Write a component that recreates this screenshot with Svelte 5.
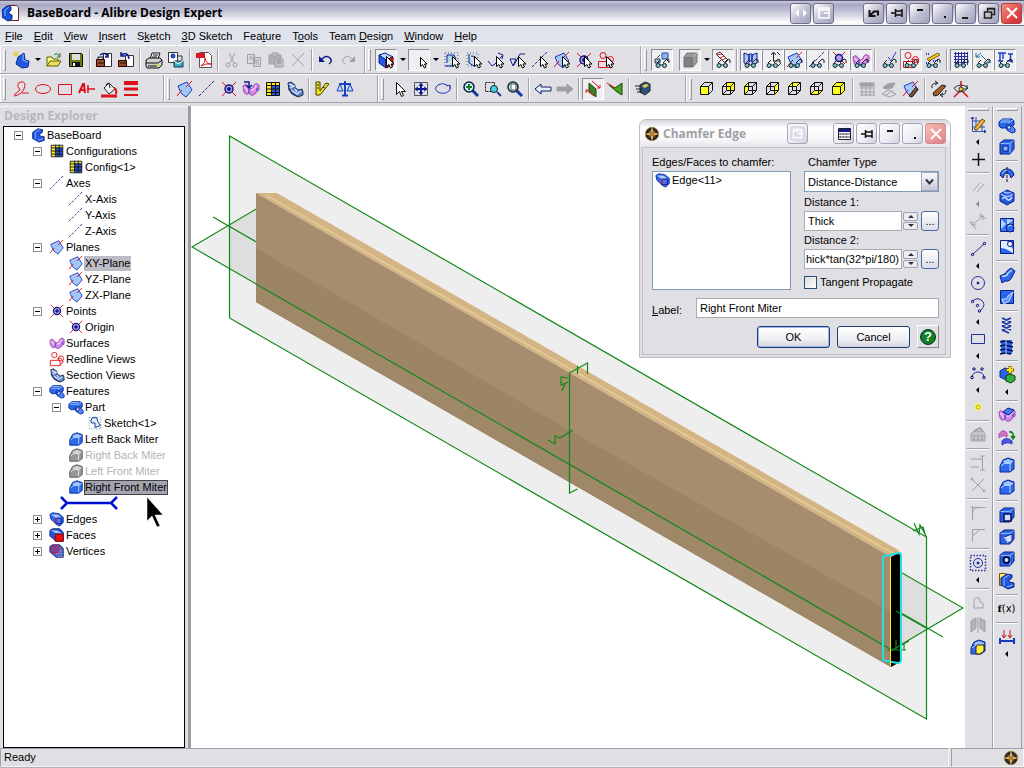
<script>
  const p = (d, stroke = '#000080', fill = 'none', w = 1) =>
    `<path d="${d}" stroke="${stroke}" fill="${fill}" stroke-width="${w}"/>`;
  const c = (x, y, r, stroke = '#000080', fill = 'none', w = 1) =>
    `<circle cx="${x}" cy="${y}" r="${r}" stroke="${stroke}" fill="${fill}" stroke-width="${w}"/>`;

  const RED = '#e0101c';
  const GRAY = '#a0a0a4';
  const NAVY = '#101a90';

  const cursor = p('M9.5 5.5v10l2.5-2 1.5 3.5 2-1-1.5-3h3z', '#000', '#fff');
  const glasses =
    p('M4 12l3-3M10 12l4-4 2 1v3', '#222') + c(5, 14.5, 2, '#123', '#7cc') + c(11.5, 14.5, 2, '#123', '#7cc') + p('M7 14h3', '#222');
  const plane = p('M2 6l9-4 5 8-6 7-5-4z', '#2038c0', '#a0c8f8') + p('M1 16l5-6M10 7l6-6', RED);
  const axis = p('M1 16L16 1', '#202080').replace('/>', ' stroke-dasharray="3 1.5"/>');
  const point = p('M2 2l14 14M16 2L2 16', RED) + c(9, 9, 4, NAVY, '#b8a0d8', 1.5) + c(9, 9, 1.5, NAVY, NAVY);
  const surface = p('M1 6q3-3 5 1l3 2q2 0 3-4 2-3 5 0v5q-2 1-4 4-4 3-6-1-3 3-5-1z', '#9c48b8', '#d488e4') +
    p('M2 8q2-1 4 4M9 10q3 1 5-5', '#f4c8fa', 'none', 1.5) + p('M7 9v5M15 8v3', '#7860d0', 'none', 2);
  const redline = c(6, 4.5, 3, RED) + p('M1.500 10.500h11v6h-11zM9 9l4-1 3 4-3 4', RED) + c(13.500, 8.500, 3, RED);
  const table = p('M2.5 2.500h13v13h-13z', '#111', '#2458d8') + p('M3 3h4v12h-4zM7 3h8v2h-8z', 'none', '#ffe820') + p('M2.5 5.500h13M2.500 9h13M2.500 12.500h13M7.500 2v13M11.500 2v13', '#111');
  const section = p('M2 3l3-1 4 3v3l4 2 3-1 1 3v3l-5 2-6-3-3-4z', '#203050', '#5c7cc8') + p('M3 4l5 2-4 2M5 10l6 4 4-3M9 9l2 3', '#d4e0ff', 'none', 1.500) + p('M3 8l3 5 5 3', '#203050');
  const part = p('M1 6l3-3h10l2 2v4l-3 3H3l-2-2z', '#0a2a98', '#2c66e8') + p('M2 6h9v5M11 6l4-2M3 4h9', '#9cc0ff') + p('M8 10l2-2 3 1 4 4v3l-3 1-5-3z', '#0a2a98', '#4a86ff') + c(11, 11.500, 1.800, '#0a2a98', '#cfe0ff');
  const solid = (inner = '') => p('M2 5l4-3h10v9l-4 5h-10z', '#08208c', '#2a62e4') + p('M2.5 5.500h9.500v10M12 5.500l4-3', '#8cb8ff') + inner;
  const fillet = p('M2 10l3-6 5-2 6 2v9l-4 3H2z', '#0a2a98', '#2f68ea') + p('M5 5l5-2 5 2-4 3H7z', 'none', '#9cc4ff') + p('M3 10l4-3h5v8M12 8l3-3', '#b8d4ff');
  const edge = p('M1 4l3-2 7 1 5 4v6l-4 4-4-2-6-6z', '#0a2a98', '#2f68ea') + p('M2 4h7l5 3-6 1z', 'none', '#a8ccff') + p('M8 8h6v6H8z', '#08208c', '#3c7af4') + p('M8 8v6', '#e01040', 'none', 1.500);
  const newp = p('M6 6l6-4 1 7 4 1-1 6-6 1-6-4z', '#0a2a98', '#2458e0') + p('M11 3v6l5 2', '#8cb8ff') + p('M1 3h6M4 0v6M2 1l4 4M6 1l-4 4', '#e8d020');
  const blueC = p('M3 6l6-4 5 1v3l-3 2v2l5 1v4l-6 2-7-4z', '#08208c', '#2458e0') + p('M6 6l5-3M6 6v8M9 15l6-2', '#8cb8ff');
  const viewCube = (face) => {
    const faces = {
      front: 'M2 6h9v9H2z', back: 'M6 2h9v9H6z', left: 'M2 6l4-4v9l-4 4z', right: 'M11 6l4-4v9l-4 4z',
      top: 'M2 6l4-4h9l-4 4z', bottom: 'M2 15l4-4h9l-4 4z', iso: 'M2 6l4-4h9v9l-4 4H2z'
    };
    return p(faces[face], 'none', '#ffff20') + p('M2.500 6.500h8v8h-8zM2.500 6.500l4-4h8l-4 4M14.500 2.500v8l-4 4', '#111') +
      (face === 'iso' || face === 'front' ? '' : p('M6.500 2.500v8h8M6.500 10.500l-4 4', '#111'));
  };
  const mag = (inner, lens = '#c8f0ff') => p('M10 10l6 6', '#1838a0', 'none', 3) + c(7, 7, 5, '#123', lens, 1.5) + inner;

  const icons = {
    new: newp,
    open: p('M2 15V6h5l1 2h5v3', '#606000', '#ffff90') + p('M2 15l3-5h11l-3 5z', '#606000', '#e8e060') + p('M9 4q3-3 5 1M15 2v4h-3', '#107020'),
    save: p('M2.500 2.500h12l1 1v12h-13z', '#111', '#707810') + p('M5 3h8v6H5z', 'none', '#dcdce0') + p('M5 11h8v5H5z', 'none', '#111') + p('M6 12h2v3H6z', 'none', '#fff'),
    pack: p('M8.500 2.500h8v13h-8z', '#333', '#fff') + p('M1.500 8.500h8v7h-8z', '#200', '#9a4a20') + p('M3 8V6h5v2M3 12h6', '#111') + p('M5 4q5-4 8 2M10 6h3V3', NAVY, 'none', 1.5),
    unpack: p('M8.500 4.500h8v11h-8z', '#333', '#fff') + p('M1.500 9.500h8v6h-8z', '#200', '#9a4a20') + p('M3 12h6', '#111') + p('M4 4q7-4 8 4M4 1v4h4', NAVY, 'none', 1.5),
    print: p('M5 8l2-6h8l-2 6z', '#111', '#fff') + p('M1 9l3-2h11l2 2v5l-3 3H2l-1-2z', '#111', '#d0d0d0') + p('M1 12h12l4-3M3 15h9M8 4h5M7 6h5', '#111') + p('M11 14h2', '#d8d800', 'none', 2),
    publish: p('M1.500 1.500h9v10h-9z', '#333', '#fff') + c(6, 5, 2, NAVY, '#2c66e8') + p('M7 10h9v6H7z', '#234', '#30b0c0') + p('M7 10l4 3 5-3', '#fff') + p('M11 5h4v4', '#234'),
    pdf: p('M4.500 1.500h9l3 3v12h-12z', '#555', '#fff') + p('M1 2h9v5H1z', 'none', '#d81820') + p('M6 15q5-3 4-8 1 6 6 6-5-1-10 2', '#d81820'),
    cut: p('M6 2l5 10M12 2L7 12', GRAY) + c(5, 14, 2, GRAY) + c(12, 14, 2, GRAY),
    copy: p('M2.500 3.500h7v9h-7zM8.500 6.500h7v9h-7z', GRAY, '#dcdce0') + p('M4 6h4M4 8h4M10 9h4M10 11h4M10 13h4', GRAY),
    paste: p('M2 4h12v9H2z', GRAY, '#b0b0b4') + p('M5 2h6v3H5zM8 8h8v8H8z', GRAY, '#c0c0c4') + p('M10 10h4M10 12h4', '#888'),
    del: p('M3 3l12 12M15 2L3 15', GRAY),
    undo: p('M4 9q5-6 9-2 3 3-1 6', NAVY, 'none', 1.5) + p('M2 5v6h6z', 'none', NAVY),
    redo: p('M14 9q-5-6-9-2-3 3 1 6', GRAY) + p('M16 5v6h-6z', 'none', GRAY),
    filter: p('M2 4l6-2 8 4-7 3z', '#08208c', '#bcd4ff') + p('M2 4l7 5v8l-7-5z', '#08208c', '#2458e0') + p('M9 9l7-3v8l-7 3z', '#600', '#e01020') + cursor,
    select: p('M10.500 6.500v9l2-2 2 3.500 1.500-1-1.500-3h2.500z', '#000', '#fff'),
    selSketch: p('M2 15h8l1-4M4 12V4h7l2 4', NAVY, '#a8d8e8') + p('M2 2h13v13H2z', '#2058a0').replace('/>', ' stroke-dasharray="1 2"/>') + cursor,
    selFig: p('M4 3v9l5 3M6 5q6 0 6 5', NAVY, '#a8d8e8') + p('M2 2h11v13H2z', '#208080').replace('/>', ' stroke-dasharray="1 2"/>') + cursor,
    selLine: p('M1 10l4 5 3-2 7-8M11 2l5 2-1 4', NAVY) + cursor,
    selCheck: p('M1 8h6l-3 7-3-7M5 14l6-11h5', NAVY) + cursor,
    selAxis: axis + cursor,
    selPlane: plane + cursor,
    selPoint: point + cursor,
    selRed: redline + cursor,
    seeParts: p('M9 2h6v6H9z', '#2050a0', '#8cb8e8') + p('M2 8h5v4H2z', '#235', '#9cd') + p('M7 4l-3 3M13 8l3 3', '#235') + glasses,
    shaded: p('M3 6l3-4h10v9l-4 5H3z', '#777', '#989898') + p('M3.500 6.500h8v9h-8z', '#777', '#808080') + p('M12 6l4-4', '#bbb'),
    seeThread: p('M2 3l4-2 8 8-3 3z', '#333', '#fff') + p('M3 4l5-1M6 7l4-2M8 9l4-2', '#d02020') + glasses,
    seePlanes: p('M2 2l5 2v10l-5-2zM10 4l5-2v10l-5 2zM7 3h3v7H7z', NAVY, '#a8c8f8') + glasses,
    seeAxes: p('M9.500 10V2M7 4l2.500-3 2.500 3M9 10h7M13 1l3 3M14 15l3-3', '#222') + glasses,
    seePlane: plane + glasses,
    seeAxis: axis + glasses,
    seePoint: p('M3 1l12 12M15 1L3 13', RED) + c(9, 7, 3.5, NAVY, '#b8a0d8', 1.5) + glasses,
    seeSurf: surface + glasses,
    seeCheck: p('M8 6l3 4 5-9', '#2040d0') + glasses,
    seeRed: redline + glasses,
    seeSketch: p('M3 8L14 2l2 2L5 10z', '#806000', '#f0c830') + p('M2 3h3M9 10h6M2 12h2', '#2040c0', 'none', 2).replace('/>', ' stroke-dasharray="1 1"/>') + glasses,
    seeGrid: p('M2 2.500h14M2 5.500h14M2 8.500h14M2 11.500h14M3.500 1v13M6.500 1v13M9.500 1v13M12.500 1v13M15.500 1v13', '#2030a0') + glasses,
    seeDim: p('M2 6l5-4M2 2v4h4M7 4l8 8M15 8v4h-4', '#1870a0') + glasses,
    seeCon: p('M2 2h8M4 2v8M7 2v6M2 10h5M12 3h5M14.500 3v8M11 10h6', '#2040d0', 'none', 1.5) + glasses,

    rCurve: p('M2 15l6-5q-5-7 1-8t3 7q-3 6-10 7M10 13h7', RED),
    rEllipse: `<ellipse cx="9" cy="9" rx="7.5" ry="4.5" stroke="${RED}" fill="none"/>`,
    rRect: p('M2.500 4.500h13v10h-13z', RED),
    rText: p('M1 13l4-9h1l1 9M3 10h4', RED, 'none', 2) + p('M9 9h8M10 5v8', RED, 'none', 1.5),
    rFill: p('M4 8l5-5 6 6-6 5z', '#222', '#f0f0f0') + p('M6 5q3-5 4 3', '#222') + p('M14 8q3 1 2 6', RED, 'none', 2) + p('M1 16h16', RED, 'none', 3),
    rWidth: p('M2 3h14', RED, 'none', 4) + p('M2 9h14', RED, 'none', 3) + p('M2 15h14', RED, 'none', 2),
    plane, axis, point, table, section,
    surfIn: surface + p('M2 2h5v5M4 5l3 3 3-3', NAVY, 'none', 1.5),
    measure: p('M2 2v13h4L15 4l-3-1-6 8V2z', '#404000', '#f0e020') + p('M3 5h2M3 8h2M9 7l2 1', '#333'),
    scale: p('M9 1v14M3 4h12M6 15.500h6', '#1840c0', 'none', 2) + p('M4 4l-3 7h6zM14 4l-3 7h6z', '#1840c0', '#b0d8f8'),

    arrow: p('M6.500 2.500v12l3-3 2 5 2-1-2-4h4z', '#111', '#fff'),
    pan: p('M2.500 2.500h13v13h-13z', '#555') + p('M9 4v10M4 9h10', NAVY, 'none', 2) + p('M7 6l2-3 2 3M7 12l2 3 2-3M6 7L3 9l3 2M12 7l3 2-3 2', NAVY),
    orbit: p('M13 5q-5-3-9 0-5 4 0 7 6 3 11-1 2-2 1-5M12 6l4-1v4', '#2038c0'),
    zoom: mag(p('M7 4v6M4 7h6', '#108020', 'none', 2)),
    zoomBox: p('M1.500 2.500h9v9h-9z', '#111').replace('/>', ' stroke-dasharray="2 1"/>') + c(10, 9, 3.5, '#123', '#40d8e0') + p('M13 12l4 4', '#1838a0', 'none', 2),
    zoomFit: mag(p('M5 4h4l1 1v5H5z', '#555', '#fff')),
    back: p('M1 9l6-5v3h10v4H7v3z', '#111a70', '#e8f0ff'),
    fwd: p('M17 9l-6-5v3H1v4h10v3z', GRAY, GRAY),
    faceA: p('M5 3l7 6v8l-7-6z', '#105010', '#408020') + p('M8 1l8 7M2 10l8 6M2 13v-3h3M16 5v3h-3', RED),
    faceB: p('M3 5l6 3 7-5v12l-5-3z', '#105010', '#50a020') + p('M1 3l8 5', RED),
    render: p('M6 5l5-3 5 2v7l-5 4-5-3z', '#222', '#305080') + p('M8 6l4-2 3 1-4 3z', 'none', '#e8d840') + p('M1 6h6M2 9h5M3 12h5M7 8v5', '#222'),
    front: viewCube('front'), back3: viewCube('back'), left: viewCube('left'), right: viewCube('right'),
    top: viewCube('top'), bottom: viewCube('bottom'), iso: viewCube('iso'),
    gridOff: p('M2 4h14M2 8h14M2 12h14M2 15h14M4 2v14M8 2v14M12 2v14M16 2v14', GRAY) + p('M2 3h13v3H2z', GRAY, GRAY),
    layOff: p('M3 8q3-5 12-5l-3 5q-4 2-9 0z', GRAY, GRAY) + p('M2 14l6-4 8 4-6 3zM5 16l8-6', GRAY),
    planeEd: plane + p('M7 16l7-9 2 2-6 8z', '#222', '#8a5020'),
    rot: p('M3 13l9-8 4 1-8 9-4 1z', '#222', '#a06020') + p('M2 8q-1-5 5-5M5 1l3 2-3 2M16 10q0 5-5 5M13 13l-3 2 3 2', '#222'),
    axesRot: p('M9 1v9M9 10l-7 7M9 10l7 7', RED, 'none', 1.5) + p('M2 8q7-6 14 0-3 4-8 4-4 0-6-4M15 5v4h-4', '#333') + c(9, 9, 2, '#333', '#e8e020'),

    sketch: p('M3.500 1v14.500H17M7 1v14M13 3v12M3 5h13M3 11h13', '#3050b0') + p('M5 13l8-10 3 2-8 9z', '#805000', '#f0b830') + p('M2 3l1.500-2L5 3M15 14l2 1.500-2 1.500', NAVY),
    cross: p('M9.500 3v13M3 9.500h13', '#111', 'none', 1.5),
    para: p('M4 13l7-8M8 14l7-8', GRAY),
    dim: p('M3 13l11-9M1 10l6 7M11 1l6 6M3 9v4h4M10 4h4v4', GRAY),
    line: p('M4 14L15 4', '#2030a0') + c(3.5, 14.5, 1.2) + c(15.5, 3.5, 1.2),
    circle: c(9, 9, 6.5, '#2030a0') + c(9, 9, 1, NAVY, NAVY),
    arc: p('M4 5q4-4 8-1 6 4 0 10', '#2030a0') + c(3.5, 5.5, 1.2) + c(8.500, 9.500, 1.2) + c(10.500, 15, 1.2),
    rect: p('M2.500 4.500h13v9h-13z', '#2030a0'),
    spline: p('M3 13q1-5 6-5t6 5', '#2030a0') + c(3, 13.500, 1.300) + c(15, 13.500, 1.300) + c(5, 5, 1.200) + c(13, 5, 1.200),
    dot: c(9, 9, 4, 'none', '#f4f090') + c(9, 9, 2, '#c0a800', '#ffff20'),
    tool: p('M2 8l3-3h9l2 3v7H2z', GRAY, '#c4c4c8') + p('M5 5l6-3 3 3M4 10h2M8 10h2M12 10h2M4 13h2M8 13h2M12 13h2', '#999', 'none', 1.500),
    trimT: p('M2 5h11M2 13h8M13.500 2v14M11 2h5M11 16h5', GRAY),
    trimX: p('M3 3l12 12M15 3L3 15', GRAY) + c(3, 3, 1, GRAY) + c(15, 15, 1, GRAY),
    cornerA: p('M3.500 16V10q0-6 6-6.500h7M2 3.500h8M3.500 2v8', GRAY),
    cornerB: p('M3.500 16V3.500H16M3.500 10l7-6', GRAY),
    dotted: p('M1.500 1.500h15v15h-15z', '#2030a0', 'none', 1.5).replace('/>', ' stroke-dasharray="1.500 1.500"/>') + c(9, 9, 4.500, '#2030a0') + c(9, 9, 1, NAVY, NAVY),
    shape: p('M5 14V7q0-4 5-3l1 4 3 1v5z', GRAY),
    mirror: p('M2 5l5-3v10l-5 4zM16 5l-5-3v10l5 4z', GRAY, '#b4b4b8') + p('M9 1v16', GRAY),
    yellowF: fillet + p('M8 7h7v6l-4 3H7V9z', '#222', '#fff040'),

    extrude: part,
    shell: solid(p('M5 8h5v5H5z', '#08208c', '#8cb8ff')),
    revolve: p('M2 9q1-6 7-6t7 6l-3 3q-1-5-4-5t-4 5z', '#08208c', '#2c66e8') + p('M9 1v16', '#111').replace('/>', ' stroke-dasharray="3 1"/>') + p('M4 8q2-4 5-4', '#a8ccff'),
    revCut: p('M2 6l7-4 7 3v8l-7 4-7-4z', '#08208c', '#2458e0') + p('M3 6q6 5 12 0M6 4q4 2 7 0', '#a0c4ff', 'none', 1.500) + p('M4 11q3-3 5 0t5-2', '#cfe0ff', 'none', 1.500),
    loft: p('M2.500 2.500h13v13h-13z', '#08208c', '#3c78f0') + p('M3 3l5 5-5 5zM9 3l6 1-6 5z', 'none', '#b8d4ff') + c(12, 12, 4, '#08208c', '#3068e8') + p('M10 11l2-2 2 1', '#cfe0ff'),
    loftCut: p('M2.500 2.500h13v13h-13z', '#08208c', '#2c66e8') + p('M3 3l6-0 6 8v4l-7-4-5-1z', 'none', '#e0ecff') + c(12, 6, 2.500, '#08208c', '#fff'),
    sweep: p('M2 10l4-2q2 0 3-3l4-3 4 3-3 6q-2 5-7 4l-3 2z', '#08208c', '#2c66e8') + p('M4 10q5 1 6-3l4-3', '#b8d4ff', 'none', 1.500),
    sweepCut: p('M2.500 2.500h13v13h-13z', '#08208c', '#2c66e8') + p('M4 11q5 1 6-3l5-4-4 9-5 3z', '#cfe0ff', '#5c96ff'),
    helix: p('M4 2l9 4M4 6l9 4M4 10l9 4M4 14l7 3M13 2L4 6M13 6l-9 4M13 10l-9 4', '#1838a8', 'none', 1.800),
    helixCut: p('M3 2h11v14H3z', 'none', '#2c66e8') + p('M2 4l5-1 8 2M2 8l5-1 8 2M2 12l5-1 8 2M2 16l5-1 6 1', '#08104c', 'none', 1.500) + p('M8 2v14', '#a8ccff'),
    boolean: p('M2 5l5-3 6 2v6l-5 4-6-3z', '#08208c', '#2c66e8') + p('M8 10l4-2 5 2v4l-4 3-5-2z', '#084008', '#30b040') + p('M12 0v8M8 4h8', '#806000', 'none', 3) + p('M12 1v6M9 4h6', '#ffe800', 'none', 2),
    surfTop: surface + p('M5 6l5-4 6 2-5 5z', '#08208c', '#4c78f0'),
    surfRep: p('M1 6q4-6 8-1v4q-4-3-8 1z', '#b050c0', '#d070c0') + p('M4 13q4-5 10 0v3q-5-3-10 1z', '#3030c0', '#4858e8') + p('M11 4q5-1 4 6M13 8l2 3 2-3', '#108020', 'none', 1.500),
    fillet, solid1: solid(p('M6 8h7v7H6z', '#000c50', '#cfe0ff', 1.500)),
    solid2: solid(p('M6 9l8-3v7l-4 2z', '#08208c', '#cfe0ff') + p('M6 9l4 6', '#cfe0ff')),
    hole: solid(c(8.500, 10, 3, '#000c50', '#cfe0ff', 2)),
    sheet: p('M1.500 1.500h6v12h-6z', '#805000', '#ffe880') + blueC,
    anno: p('M2 13h14M2 10v6M16 10v6', '#1838c0', 'none', 2) + p('M6 2v7M12 2v7M4 7l2 3 2-3M10 7l2 3 2-3', '#c01818'),
    base: blueC, surface, redline, part, edge,
    sketchN: p('M2.500 2.500h13v13h-13z', '#208090').replace('/>', ' stroke-dasharray="1 2"/>') + p('M6 3q-3 4-1 6l4 0 0 5 6-2-3-5-1-4z', NAVY, '#d8f0f8'),
    filletOff: p('M2 10l3-6 5-2 6 2v9l-4 3H2z', '#555', '#989898') + p('M5 5l5-2 5 2-4 3H7z', 'none', '#d0d0d0') + p('M3 10l4-3h5v8M12 8l3-3', '#e8e8e8'),
    face: p('M1 4l3-2h8l4 4v10H8l-7-6z', '#0a1a78', '#2458d8') + p('M2 4h7l6 3H8z', 'none', '#a8ccff') + p('M7 8h9v8H7z', '#700', '#f01010'),
    vertex: p('M1 4l3-2h8l4 4v10H8l-7-6z', '#0a1a78', '#5068c0') + p('M8 9h8M8 12h8M10 15h6', '#b0c8f8').replace('/>', ' stroke-dasharray="1 1"/>') + c(7, 7, 4, '#e01030', '#4060d8', 1.500) + c(7, 7, 1.500, '#e01030')
  };

  // Tokens: "|" separator, "_" gap, "v" drop arrow, leading "+" pressed
  const row1 = [
    { size: 365, items: 'new v open save | pack unpack | print publish | pdf | cut copy paste del | undo redo' },
    { size: 276, items: '+filter v +select v selSketch selFig selLine selCheck selAxis selPlane selPoint selRed' },
    { size: 0, items: '+seeParts _ +shaded v +seeThread | +seePlanes +seeAxes +seePlane +seeAxis +seePoint +seeSurf | seeCheck +seeRed seeSketch | +seeGrid +seeDim +seeCon' }
  ];
  const row2 = [
    { size: 164, items: 'rCurve rEllipse rRect rText rFill rWidth' },
    { size: 214, items: 'plane axis point surfIn table section | measure scale' },
    { size: 308, items: 'arrow pan orbit | zoom zoomBox zoomFit | back fwd | +faceA faceB | render' },
    { size: 0, items: 'front back3 left right top bottom iso | gridOff layOff planeEd | rot axesRot' }
  ];
  const side = [
    'sketch v cross | para w dim | line v circle arc v rect v spline v dot | tool | trimT trimX | cornerA cornerB | dotted v | shape mirror yellowF',
    'extrude shell | revolve revCut | loft loftCut | sweep sweepCut | helix helixCut | boolean v | surfTop surfRep | fillet fillet | solid1 solid2 hole sheet | fx | anno v'
  ];
  const menus = [['', 'F', 'ile'], ['', 'E', 'dit'], ['', 'V', 'iew'], ['', 'I', 'nsert'], ['S', 'k', 'etch'], ['', '3', 'D Sketch'],
    ['Fea', 't', 'ure'], ['T', 'o', 'ols'], ['Team ', 'D', 'esign'], ['', 'W', 'indow'], ['', 'H', 'elp']];

  const tree = [
    [0, '-', 'base', 'BaseBoard'], [1, '-', 'table', 'Configurations'], [2, '', 'table', 'Config<1>'],
    [1, '-', 'axis', 'Axes'], [2, '', 'axis', 'X-Axis'], [2, '', 'axis', 'Y-Axis'], [2, '', 'axis', 'Z-Axis'],
    [1, '-', 'plane', 'Planes'], [2, '', 'plane', 'XY-Plane', 'hot'], [2, '', 'plane', 'YZ-Plane'], [2, '', 'plane', 'ZX-Plane'],
    [1, '-', 'point', 'Points'], [2, '', 'point', 'Origin'], [1, '', 'surface', 'Surfaces'], [1, '', 'redline', 'Redline Views'],
    [1, '', 'section', 'Section Views'], [1, '-', 'part', 'Features'], [2, '-', 'part', 'Part'], [3, '', 'sketchN', 'Sketch<1>'],
    [2, '', 'fillet', 'Left Back Miter'], [2, '', 'filletOff', 'Right Back Miter', 'off'], [2, '', 'filletOff', 'Left Front Miter', 'off'],
    [2, '', 'fillet', 'Right Front Miter', 'picked'], null,
    [1, '+', 'edge', 'Edges'], [1, '+', 'face', 'Faces'], [1, '+', 'vertex', 'Vertices']
  ];

  const caption = {
    swap: p('M7 5l-4 4 4 4zM11 5l4 4-4 4z', 'none', '#fff'),
    panel: p('M4 4h10v10H4zM9 9h6M4 6h10', '#fff', 'none', 1.500),
    ret: p('M4.500 6v6h6M5 11.500l4-4h4v4', '#111', 'none', 2),
    pin: p('M3 9h4M7.500 5v8M8 7h6v4H8M14 5v8', '#111', 'none', 1.500),
    dash: p('M6 6h6', '#111', 'none', 2),
    dotc: p('M10 13h2', '#111', 'none', 2),
    min: p('M5 14h6', '#222', 'none', 2),
    max: p('M7.500 7.500v-3h7v6h-3M4.500 8h7v6h-7zM7 5h8', '#222', 'none', 1.500),
    close: p('M4 4l10 10M14 4L4 14', '#fff', 'none', 2),
    cal: p('M3.500 3.500h12v11h-12z', '#222', '#fff') + p('M4 4h11v3H4z', 'none', NAVY) + p('M6 8v6M9 8v6M12 8v6M4 9h11M4 12h11', '#445').replace('/>', ' stroke-dasharray="2 1"/>')
  };

  let kind = $state('Distance-Distance');
  let d1 = $state('Thick');
  let d2 = $state('hick*tan(32*pi/180)');
  let tangent = $state(false);
  let label = $state('Right Front Miter');
</script>

{#snippet glyph(body)}
  <svg class="glyph" viewBox="0 0 18 18" aria-hidden="true">{@html body}</svg>
{/snippet}

{#snippet tools(list)}
  {#each list.split(' ') as t}
    {#if t === '|'}<span class="sep"></span>
    {:else if t === '_'}<span class="gap"></span>
    {:else if t === 'v'}<button class="drop" aria-label="More"></button>
    {:else if t === 'w'}<button class="drop" disabled aria-label="More"></button>
    {:else if t === 'fx'}<button class="tool fx"><b>f</b>(x)</button>
    {:else}
      <button class="tool" class:pressed={t[0] === '+'} aria-label={t.replace('+', '')}>{@render glyph(icons[t.replace('+', '')])}</button>
    {/if}
  {/each}
{/snippet}

{#snippet cap(name, extra = '')}
  <button type="button" class="cap {extra}" aria-label={name}>{@render glyph(caption[name])}</button>
{/snippet}

{#snippet logo()}
  <svg class="logo" viewBox="0 0 18 18" aria-hidden="true">
    <circle cx="9" cy="9" r="7.500" fill="#20242c" stroke="#a08040" />
    <path d="M9 1l2 6 6 2-6 2-2 6-2-6-6-2 6-2z" fill="#e8b050" />
    <path d="M4 4l5 3 5-3-3 5 3 5-5-3-5 3 3-5z" fill="#8a5c28" opacity=".6" />
  </svg>
{/snippet}

<div class="app">
  <header class="title">
    <svg class="appicon" viewBox="0 0 18 18" aria-hidden="true">
      <path d="M6.500 1.500h8l2 2v13h-10z" fill="#fff" stroke="#702020" />
      <path d="M0 6l5-4 4 1v3l-2 2v2l3 1v4l-4 2-6-4z" fill="#1850e0" stroke="#08208c" />
      <path d="M3 6l4-3M3 6v6" stroke="#60c0ff" fill="none" />
    </svg>
    <h1>BaseBoard - Alibre Design Expert</h1>
    <div class="caps">
      {@render cap('swap')}{@render cap('panel', 'last')}
      {#each ['ret', 'pin', 'dash', 'dotc', 'min', 'max'] as n}{@render cap(n)}{/each}
      {@render cap('close', 'red')}
    </div>
  </header>

  <nav class="menu">
    {#each menus as m}<button>{m[0]}<u>{m[1]}</u>{m[2]}</button>{/each}
  </nav>

  {#each [row1, row2] as row}
    <div class="bars">
      {#each row as bar}
        <div class="bar" style:flex={bar.size ? `0 0 ${bar.size}px` : '1 1 0'}>
          <span class="grip"></span>{@render tools(bar.items)}
        </div>
      {/each}
    </div>
  {/each}

  <main>
    <aside class="explorer">
      <h2>Design Explorer</h2>
      <div class="treebox">
        <ul>
          {#each tree as n}
            {#if n}
              <li class="lv{n[0]}">
                <span class="exp" class:box={n[1]}>
                  {#if n[1]}<svg viewBox="0 0 9 9" aria-hidden="true"><path d={n[1] === '+' ? 'M2 4.500h5M4.500 2v5' : 'M2 4.500h5'} stroke="#000" /></svg>{/if}
                </span>
                {@render glyph(icons[n[2]])}
                <span class="name {n[4] ?? ''}">{n[3]}</span>
              </li>
            {:else}
              <li class="bone">
                <svg viewBox="0 0 58 14" aria-hidden="true"><path d="M1 1l6 6-6 6M57 1l-6 6 6 6M7 7h44" fill="none" stroke="#0010d0" stroke-width="2.500" /></svg>
              </li>
            {/if}
          {/each}
        </ul>
      </div>
      <svg class="pointer" viewBox="0 0 18 32" aria-hidden="true"><path d="M1 1v24l5-5 5 11 3-1-5-11h8z" fill="#000" stroke="#fff" stroke-width=".5" /></svg>
    </aside>

    <section class="view">
      <svg class="model" viewBox="191 106 773 642" aria-label="Model view">
        <path d="M229 136L926 537V719L229 318z" fill="#000" fill-opacity=".067" />
        <path d="M192 247L263 205L963 608L892 650z" fill="#000" fill-opacity=".067" />
        <g fill="none" stroke="#108818" stroke-width="1.200">
          <path d="M229.500 136L926.500 537V719L229.500 318z" />
          <path d="M192 247L263 205L963 608L892 650z" />
          <path d="M213 217L943 637" />
        </g>
        <path d="M256 193H277L900 551L891 557z" fill="#d4b484" />
        <path d="M266 195L894 554" stroke="#e2c896" stroke-width="2" />
        <path d="M256 193L891 557V667L256 302z" fill="#a58d6d" />
        <path d="M256 248L560 425L891 612V667L256 302z" fill="#9b8565" />
        <path d="M256 284L891 651V667L256 302z" fill="#9f8868" />
        <path d="M891 557L900 552V662L891 667z" fill="#000" />
        <g fill="none" stroke="#108818" stroke-width="1.200">
          <path d="M256 284L892 650L909 641" />
          <path d="M577.500 489L569.500 493V373L587.500 363V374M577.500 366V374" />
          <path d="M568 378L561 377V385L568 382M565 384L562 391" />
          <path d="M548 440L555 444V436L560 438L573 430" />
          <path d="M914 523L919 534L920 525L925 534M913 531L923 527L926 537" />
          <path d="M896 611L926 628M896 640V650M904 643V650M887 650H906" />
        </g>
        <path d="M884 556L899 553Q901 553 901 556V660Q901 663 898 663L886 661Q883 661 883 658V558Q883 556 885 556z" fill="none" stroke="#20e0e0" stroke-width="2" />
        <path d="M890.500 557V666" stroke="#ffe820" />
      </svg>

      <div class="dialog" role="dialog" aria-labelledby="dlg-title">
        <div class="dtitle">
          {@render logo()}
          <h2 id="dlg-title">Chamfer Edge</h2>
          <div class="caps">
            {@render cap('panel', 'last pale')}
            {@render cap('cal', 'pale')}{@render cap('pin', 'pale')}{@render cap('dash', 'pale')}{@render cap('dotc', 'pale')}
            {@render cap('close', 'red faded')}
          </div>
        </div>
        <form class="dbody" onsubmit={(e) => e.preventDefault()}>
          <div class="cols">
            <div class="pick">
              <span id="pick-l" class="cap-l">Edges/Faces to chamfer:</span>
              <ul class="picklist" aria-labelledby="pick-l"><li>{@render glyph(icons.edge)}<span>Edge&lt;11&gt;</span></li></ul>
            </div>
            <div class="opts">
              <label class="cap-l inset" for="kind">Chamfer Type</label>
              <div class="selwrap">
                <select id="kind" bind:value={kind}><option>Distance-Distance</option><option>Distance-Angle</option></select>
                <span class="chev"><svg viewBox="0 0 9 8" aria-hidden="true"><path d="M1 1.500l3.500 4 3.500-4" fill="none" stroke="#333" stroke-width="2" /></svg></span>
              </div>
              <label class="cap-l" for="d1">Distance 1:</label>
              <div class="field">
                <input id="d1" type="text" bind:value={d1} />
                <span class="spin"><button type="button" class="up" aria-label="Increase"></button><button type="button" class="down" aria-label="Decrease"></button></span>
                <button type="button" class="dots">...</button>
              </div>
              <label class="cap-l" for="d2">Distance 2:</label>
              <div class="field">
                <input id="d2" type="text" class="tight" bind:value={d2} />
                <span class="spin"><button type="button" class="up" aria-label="Increase"></button><button type="button" class="down" aria-label="Decrease"></button></span>
                <button type="button" class="dots">...</button>
              </div>
              <label class="check"><input type="checkbox" bind:checked={tangent} />Tangent Propagate</label>
            </div>
          </div>
          <div class="labelrow">
            <label for="lbl"><u>L</u>abel:</label>
            <input id="lbl" type="text" bind:value={label} />
          </div>
          <div class="actions">
            <button class="push default">OK</button>
            <button type="button" class="push">Cancel</button>
            <button type="button" class="help" aria-label="Help"><span>?</span></button>
          </div>
        </form>
      </div>
    </section>

    {#each side as s}
      <div class="sidebar"><span class="grip"></span>{@render tools(s)}</div>
    {/each}
  </main>

  <footer>
    <span class="cell grow">Ready</span>
    <span class="cell tail">{@render logo()}</span>
  </footer>
</div>

<style>
  :global(body) { margin: 0; background: #e0dfe3; }
  .app {
    min-height: 100vh; display: flex; flex-direction: column; overflow: hidden;
    font: 11px/16px "Liberation Sans", Arial, sans-serif; color: #000; background: #e0dfe3;
  }
  .app * { box-sizing: border-box; }
  button { font: inherit; color: inherit; padding: 0; margin: 0; border: 0; background: none; }
  h1, h2, ul { margin: 0; padding: 0; }
  li { list-style: none; }
  .glyph { width: 18px; height: 18px; flex: none; display: block; }
  .logo { width: 16px; height: 16px; flex: none; display: block; }

  .title {
    height: 26px; display: flex; align-items: center; padding: 0 2px;
    border-top: 1px solid #5c5a78; border-bottom: 1px solid #77779a;
    background: linear-gradient(#c8c8d8, #a9a8c4 15%, #c4c4d6 45%, #fff 90%, #f0f0f4);
  }
  .appicon { width: 18px; height: 18px; }
  h1 { flex: 1; padding-left: 7px; font: bold 12px/20px "Open Sans", "Noto Sans", sans-serif; }
  .caps { display: flex; gap: 2px; }
  .cap {
    width: 21px; height: 21px; display: grid; place-items: center; border: 1px solid #70708c; border-radius: 3px;
    background: linear-gradient(135deg, #fff, #c2c2d4 50%, #a0a0bc);
  }
  .cap.last { margin-right: 27px; }
  .cap.red { background: linear-gradient(135deg, #f49080, #e04848 60%, #c83038); border-color: #b04040; }
  .cap.pale { background: linear-gradient(135deg, #fff, #ececf2 60%, #d0d0dc); border-color: #a4a4b8; }
  .cap.faded { opacity: .55; }

  .menu { height: 19px; display: flex; align-items: center; padding-left: 5px; gap: 11px; background: #dfe3ec; }
  .menu button { line-height: 18px; }

  .bars { height: 29px; display: flex; border-top: 1px solid #fff; border-bottom: 1px solid #a4a4ac; }
  .bar { display: flex; align-items: center; border-right: 1px solid #a4a4ac; border-left: 1px solid #fff; overflow: hidden; }
  .bar:last-child { border-right: 0; }
  .bar .grip { width: 3px; height: 22px; margin: 0 4px 0 2px; border: 1px solid #fff; border-right-color: #9a9aa2; border-bottom-color: #9a9aa2; flex: none; }
  .tool { width: 22px; height: 22px; flex: none; display: grid; place-items: center; }
  .pressed { background: #efeff2; border: 1px solid #8c8c94; border-right-color: #fff; border-bottom-color: #fff; }
  .bar .sep { width: 2px; height: 22px; margin: 0 2px; border-left: 1px solid #a0a0a8; border-right: 1px solid #fff; flex: none; }
  .gap { width: 6px; flex: none; }
  .drop { width: 11px; height: 22px; flex: none; display: grid; place-items: center; }
  .drop::before { content: ""; border: 3px solid transparent; border-top-color: #000; border-bottom: 0; }
  .drop:disabled { opacity: .4; }
  .fx { display: flex; align-items: center; justify-content: center; font: 10px/22px "DejaVu Sans", sans-serif; }
  .fx b { font-family: "DejaVu Serif", serif; }

  main { flex: 1; display: flex; min-height: 0; margin-top: 3px; }
  .explorer { width: 191px; flex: none; display: flex; flex-direction: column; position: relative; border-right: 3px solid #9c9ca4; }
  .explorer h2 { font: bold 12px/14px "Open Sans", "Noto Sans", sans-serif; color: #b8b8bc; padding: 2px 4px 3px; border-top: 1px solid #f4f4f6; }
  .treebox { flex: 1; margin: 0 3px; border: 1px solid #000; background: #fff; }
  .treebox li { height: 16px; display: flex; align-items: center; white-space: nowrap; }
  .lv0 { padding-left: 10px; }
  .lv1 { padding-left: 29px; }
  .lv2 { padding-left: 48px; }
  .lv3 { padding-left: 67px; }
  .exp { width: 9px; height: 9px; margin-right: 7px; flex: none; }
  .exp.box { border: 1px solid #8c8c94; }
  .exp svg { display: block; width: 9px; height: 9px; margin: -1px; }
  .treebox .glyph { width: 16px; height: 16px; }
  .name { padding: 0 1px; height: 15px; line-height: 15px; }
  .hot { background: #bcbcc4; }
  .off { color: #b4b4b4; }
  .picked { background: #a4a4b0; outline: 1px solid #444; outline-offset: -1px; }
  .treebox .bone { padding-left: 56px; }
  .bone svg { width: 58px; height: 14px; }
  .pointer { position: absolute; left: 146px; top: 390px; width: 18px; height: 32px; }

  .view { flex: 1; min-width: 0; position: relative; background: #fff; overflow: hidden; }
  .model { display: block; width: 100%; height: 100%; }

  .dialog {
    position: absolute; right: 13px; top: 13px; width: 312px; background: #e0dfe3;
    border: 1px solid #bcbcc8; border-radius: 7px 7px 0 0; padding: 0 4px 2px 2px;
  }
  .dtitle {
    height: 27px; display: flex; align-items: center; padding: 0 4px; margin: 0 -4px 0 -2px; border-radius: 6px 6px 0 0;
    background: linear-gradient(#d4d4dc, #fff 30%, #f8f8fa 70%, #e4e4ea);
  }
  .dtitle h2 { flex: 1; padding-left: 3px; font: bold 12px/20px "Open Sans", "Noto Sans", sans-serif; color: #a0a0a4; }
  .dtitle .last { margin-right: 23px; }
  .dtitle .last .glyph { background: #dcdce6; border-radius: 2px; width: 15px; height: 15px; }
  .dbody { border: 1px solid #c0c0cc; padding: 6px 6px 6px 9px; }
  .cols { display: flex; gap: 13px; }
  .cap-l { display: block; line-height: 16px; height: 16px; margin-bottom: 1px; }
  .inset { padding-left: 4px; }
  .pick { flex: 1; display: flex; flex-direction: column; padding-bottom: 1px; }
  .picklist { flex: 1; border: 1px solid #7f9db9; background: #fff; padding: 0 2px; }
  .picklist li { display: flex; align-items: center; gap: 1px; }
  .picklist .glyph { width: 16px; height: 16px; }
  .opts { width: 135px; }
  input[type="text"], select {
    font: inherit; color: #000; background: #fff; border: 1px solid #a5acb2; border-radius: 0; padding: 0 3px; margin: 0; outline: 0; min-width: 0;
  }
  .selwrap { position: relative; height: 21px; margin-bottom: 2px; }
  select { appearance: none; width: 100%; height: 21px; border-color: #7f9db9; }
  .chev {
    position: absolute; right: 1px; top: 1px; width: 17px; height: 19px; display: grid; place-items: center; pointer-events: none;
    border: 1px solid #a8a8bc; background: linear-gradient(#fafafc, #c8c8d8);
  }
  .chev svg { width: 9px; height: 8px; }
  .field { display: flex; height: 20px; margin-bottom: 1px; }
  .field input { flex: 1; }
  .field .tight { padding: 0 1px; }
  .spin { width: 15px; margin: 1px 3px 1px 1px; display: grid; gap: 1px; }
  .spin button { border: 1px solid #a0a0b4; border-radius: 2px; background: #ececf2; display: grid; place-items: center; }
  .spin button::before { content: ""; border: 3px solid transparent; }
  .spin .up::before { border-bottom-color: #333; border-top: 0; }
  .spin .down::before { border-top-color: #333; border-bottom: 0; }
  .dots { width: 18px; border: 1px solid #4c6ca4; border-radius: 3px; background: linear-gradient(#fff, #dcdce8); line-height: 14px; }
  .check { display: flex; align-items: center; gap: 3px; height: 18px; margin-top: 4px; }
  .check input { appearance: none; width: 13px; height: 13px; margin: 0; border: 1px solid #1c5180; background: linear-gradient(135deg, #dcdcd8, #fff); }
  .labelrow { display: flex; align-items: flex-end; margin-top: 7px; gap: 14px; }
  .labelrow input { flex: 1; height: 20px; }
  .actions { display: flex; justify-content: flex-end; align-items: center; gap: 7px; margin-top: 7px; }
  .push { width: 73px; height: 22px; border: 1px solid #1c3c74; border-radius: 3px; background: linear-gradient(#fff, #f0f0f4 60%, #d4d4e0); }
  .default { box-shadow: inset 0 0 0 1px #9cb8ec; }
  .help { width: 22px; height: 23px; border: 1px solid #fff; border-right-color: #888; border-bottom-color: #888; display: grid; place-items: center; }
  .help span { width: 16px; height: 16px; border-radius: 50%; background: #108020; border: 1px solid #033; color: #fff; font: bold 13px/14px "Liberation Sans", sans-serif; }

  .sidebar { width: 29px; flex: none; display: flex; flex-direction: column; align-items: center; border-left: 1px solid #fff; border-right: 1px solid #a0a0a8; padding: 2px 2px 0 0; }
  .sidebar .grip { width: 22px; height: 3px; margin: 0 0 3px; border: 1px solid #fff; border-right-color: #9a9aa2; border-bottom-color: #9a9aa2; }
  .sidebar .sep { width: 22px; height: 2px; margin: 2px 0; border-top: 1px solid #a0a0a8; border-bottom: 1px solid #fff; }
  .sidebar .drop { width: 22px; height: 12px; }
  .sidebar .drop::before { border: 3px solid transparent; border-right-color: #000; border-left: 0; }
  .sidebar:last-child { margin-right: 2px; }

  footer { height: 20px; display: flex; gap: 2px; border-bottom: 1px solid #b0b0b8; }
  .cell { border: 1px solid #a0a0a8; border-right-color: #f4f4f6; border-bottom-color: #f4f4f6; padding-left: 3px; line-height: 17px; }
  .grow { flex: 1; }
  .tail { width: 73px; display: flex; align-items: center; justify-content: flex-end; padding-right: 4px; }
</style>
